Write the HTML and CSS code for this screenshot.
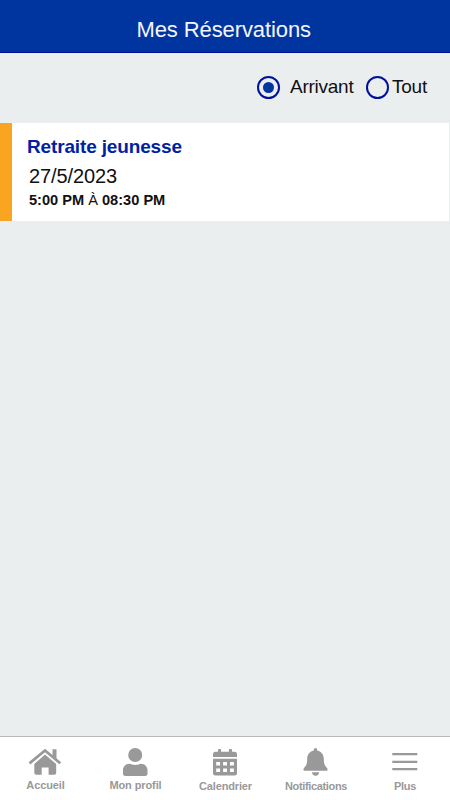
FILE: index.html
```html
<!DOCTYPE html>
<html lang="fr">
<head>
<meta charset="utf-8">
<meta name="viewport" content="width=device-width, initial-scale=1">
<title>Mes Réservations</title>
<link rel="stylesheet" href="styles.css">
</head>
<body>
<div class="app">
  <header class="header"><h1>Mes Réservations</h1></header>
  <main class="main">
    <div class="filters">
      <div class="option option-first"><span class="radio checked"></span><span>Arrivant</span></div>
      <div class="option option-all"><span class="radio"></span><span>Tout</span></div>
    </div>
    <article class="card">
      <h2>Retraite jeunesse</h2>
      <p class="date">27/5/2023</p>
      <p class="time"><b>5:00 PM</b> À <b>08:30 PM</b></p>
    </article>
  </main>
  <nav class="nav">
    <a class="tab tab-home">
      <svg width="34" height="28" viewBox="0 0 34 28"><path d="M1.500 15.300 17 2.500 32.300 15.300" fill="none" stroke="#999" stroke-width="2.800"/><path d="M24.500 1.200h4v10l-4-3.500zM17 6.600 28.200 16v8.700q0 2-2 2h-5.600v-7.200h-6.900v7.200H8.300q-2 0-2-2V16z"/></svg>
      <span>Accueil</span>
    </a>
    <a class="tab tab-profile">
      <svg width="34" height="28" viewBox="0 0 34 28"><circle cx="17.200" cy="7" r="7"/><path d="M5 22.500c0-4 2.600-6.800 6.600-6.800 1.600 0 2.600 1.300 5.600 1.300s4-1.300 5.600-1.300c4 0 6.700 2.800 6.700 6.800V25.500q0 2.500-2.500 2.500H7.500Q5 28 5 25.500z"/></svg>
      <span>Mon profil</span>
    </a>
    <a class="tab tab-calendar">
      <svg width="34" height="28" viewBox="0 0 34 28"><path d="M7.500 3.800H10V1.800Q10 1 10.800 1h1.500q.8 0 .8.800v2h7.800v-2q0-.8.800-.8h1.500q.8 0 .8.800v2h2.500Q29 3.800 29 6.300V9H5V6.300Q5 3.800 7.500 3.800z"/><path fill-rule="evenodd" d="M5 10.700h24v14.300q0 2.500-2.500 2.500h-19Q5 27.500 5 25zM8.200 14v3.500h3.900V14zM15.100 14v3.500H19V14zM22 14v3.500h3.900V14zM8.200 20.600v3.500h3.900v-3.500zM15.100 20.600v3.500H19v-3.500zM22 20.600v3.500h3.900v-3.500z"/></svg>
      <span>Calendrier</span>
    </a>
    <a class="tab tab-bell">
      <svg width="34" height="28" viewBox="0 0 34 28"><path d="M17.500 0q1.700 0 1.700 1.700v.7c4.100.8 6.600 4.100 6.600 8.400 0 5.300 1.200 7 3 8.900 1.600 1.800.7 3 -.8 3H7c-1.500 0-2.400-1.200-.8-3 1.800-1.900 3-3.600 3-8.900 0-4.300 2.500-7.600 6.600-8.400v-.7Q15.800 0 17.500 0zM14 24.300h7.100q-.2 3.400-3.500 3.400T14 24.300z"/></svg>
      <span>Notifications</span>
    </a>
    <a class="tab tab-more">
      <svg width="34" height="28" viewBox="0 0 34 28"><path d="M4.300 5h25v2.300h-25zM4.300 12.700h25V15h-25zM4.300 20h25v2.300h-25z"/></svg>
      <span>Plus</span>
    </a>
  </nav>
</div>
</body>
</html>
```
FILE: styles.css
```css
* { box-sizing: border-box; margin: 0; padding: 0; }
body { font-family: "Liberation Sans", Arial, sans-serif; background: #ebeeef; color: #111; }
.app { height: 100vh; display: flex; flex-direction: column; }
.header { height: 53px; background: #0035a0; border-bottom: 1px solid #0010a0; color: #f4f6ff; padding: 17px 0 0 136.500px; }
.header h1 { font-size: 22px; line-height: 26px; font-weight: 400; letter-spacing: -0.100px; white-space: nowrap; }
.main { flex: 1; }
.filters { height: 70px; display: flex; padding: 23px 0 0 257px; font-size: 19px; line-height: 22px; letter-spacing: -0.250px; }
.option { display: flex; white-space: nowrap; }
.option-first { width: 109px; gap: 10px; }
.option-all { gap: 3px; }
.radio { width: 23px; height: 23px; border: 2px solid #00109c; border-radius: 50%; flex: none; display: grid; place-items: center; }
.checked::after { content: ""; width: 11px; height: 11px; border-radius: 50%; background: #0035a0; }
.card { height: 98px; margin-right: 1px; background: #fff; border-left: 12px solid #f9a522; padding: 13px 0 0 15px; }
.card h2 { font-size: 19px; line-height: 22px; color: #001fa5; letter-spacing: -0.150px; white-space: nowrap; }
.date { font-size: 20px; line-height: 24px; margin: 6px 0 0 2px; letter-spacing: -0.100px; }
.time { font-size: 14.600px; line-height: 18px; margin: 3px 0 0 2px; }
.nav { height: 64px; display: grid; grid-template-columns: repeat(5, 1fr); background: #fff; border-top: 1px solid #b9b9b9; }
.tab { display: flex; flex-direction: column; align-items: center; padding-top: 11px; color: #999; font-size: 11px; font-weight: 700; line-height: 13px; letter-spacing: -0.100px; white-space: nowrap; }
.tab svg { display: block; fill: #999; }
.tab span { margin-top: 4px; }
.tab-home span, .tab-profile span { margin-top: 3px; }
.tab-home span { padding-left: 1px; }
.tab-profile span { padding-left: 1px; }
.tab-calendar span { padding-left: 1px; letter-spacing: -0.150px; }
.tab-bell span { padding-left: 2px; letter-spacing: -0.350px; }
.tab-more span { letter-spacing: -0.300px; }
```
